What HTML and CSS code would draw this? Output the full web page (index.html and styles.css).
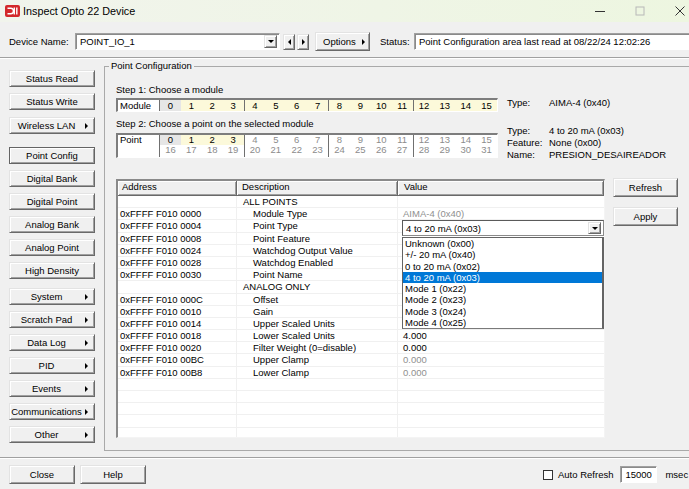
FILE: index.html
```html
<!DOCTYPE html>
<html>
<head>
<meta charset="utf-8">
<title>Inspect Opto 22 Device</title>
<link rel="stylesheet" href="styles.css">
</head>
<body>
<header class="titlebar">
  <svg class="appicon" width="15" height="12" viewBox="0 0 15 12"><rect x="0" y="0" width="15" height="12" rx="2" fill="#d3282b"/><path d="M2.5 3.2h3.2a2.8 2.8 0 0 1 0 5.6H2.5" fill="none" stroke="#fff" stroke-width="1.5"/><path d="M9.3 2.6v6.8M11.8 2.6v6.8" stroke="#fff" stroke-width="1.4"/></svg>
  <span class="title">Inspect Opto 22 Device</span>
  <div class="winctl">
    <span class="wc"><svg width="10" height="10" viewBox="0 0 10 10"><path d="M0 5.5h10" stroke="#333" stroke-width="1"/></svg></span>
    <span class="wc"><svg width="10" height="10" viewBox="0 0 10 10"><rect x="1" y="1" width="8" height="8" fill="none" stroke="#b8b8b8" stroke-width="1"/></svg></span>
    <span class="wc"><svg width="10" height="10" viewBox="0 0 10 10"><path d="M0.5 0.5l9 9M9.5 0.5l-9 9" stroke="#333" stroke-width="1"/></svg></span>
  </div>
</header>

<div class="toolbar">
  <span class="lbl-dev">Device Name:</span>
  <div class="field devcombo"><span>POINT_IO_1</span><span class="raised dbtn"><i class="tri-down"></i></span></div>
  <span class="raised nbtn"><i class="tri-left"></i></span>
  <span class="raised nbtn"><i class="tri-right"></i></span>
  <button class="btn opts"><span>Options</span><i class="tri-right"></i></button>
  <span class="lbl-status">Status:</span>
  <div class="field statusbox">Point Configuration area last read at 08/22/24 12:02:26</div>
</div>
<div class="sep"></div>

<div class="main">
  <nav class="side">
    <button class="btn">Status Read</button>
    <button class="btn">Status Write</button>
    <button class="btn arr g1"><span class="bl">Wireless LAN</span><i class="tri-right"></i></button>
    <button class="btn def g2">Point Config</button>
    <button class="btn">Digital Bank</button>
    <button class="btn">Digital Point</button>
    <button class="btn">Analog Bank</button>
    <button class="btn">Analog Point</button>
    <button class="btn">High Density</button>
    <button class="btn arr g3"><span class="bl">System</span><i class="tri-right"></i></button>
    <button class="btn arr"><span class="bl">Scratch Pad</span><i class="tri-right"></i></button>
    <button class="btn arr"><span class="bl">Data Log</span><i class="tri-right"></i></button>
    <button class="btn arr"><span class="bl">PID</span><i class="tri-right"></i></button>
    <button class="btn arr"><span class="bl">Events</span><i class="tri-right"></i></button>
    <button class="btn arr"><span class="bl">Communications</span><i class="tri-right"></i></button>
    <button class="btn arr"><span class="bl">Other</span><i class="tri-right"></i></button>
  </nav>

  <fieldset class="group">
    <legend>Point Configuration</legend>
    <div class="gbody">
      <div class="steprow s1">
        <div class="stepcol">
          <div class="steplbl">Step 1: Choose a module</div>
          <div class="strip mstrip">
            <div class="slab">Module</div>
            <div class="sgrp"><span class="c sel">0</span><span class="c y">1</span><span class="c y">2</span><span class="c y">3</span></div>
            <div class="sgrp"><span class="c y">4</span><span class="c y">5</span><span class="c y">6</span><span class="c y">7</span></div>
            <div class="sgrp"><span class="c y">8</span><span class="c y">9</span><span class="c y">10</span><span class="c y">11</span></div>
            <div class="sgrp"><span class="c y">12</span><span class="c y">13</span><span class="c y">14</span><span class="c y">15</span></div>
          </div>
        </div>
        <div class="info i1">
          <span>Type:</span><span>AIMA-4 (0x40)</span>
        </div>
      </div>

      <div class="steprow s2">
        <div class="stepcol">
          <div class="steplbl">Step 2: Choose a point on the selected module</div>
          <div class="strip pstrip">
            <div class="slab">Point</div>
            <div class="sgrp">
              <span class="c sel">0</span><span class="c y">1</span><span class="c y">2</span><span class="c y">3</span>
              <span class="c d">16</span><span class="c d">17</span><span class="c d">18</span><span class="c d">19</span>
            </div>
            <div class="sgrp">
              <span class="c d">4</span><span class="c d">5</span><span class="c d">6</span><span class="c d">7</span>
              <span class="c d">20</span><span class="c d">21</span><span class="c d">22</span><span class="c d">23</span>
            </div>
            <div class="sgrp">
              <span class="c d">8</span><span class="c d">9</span><span class="c d">10</span><span class="c d">11</span>
              <span class="c d">24</span><span class="c d">25</span><span class="c d">26</span><span class="c d">27</span>
            </div>
            <div class="sgrp">
              <span class="c d">12</span><span class="c d">13</span><span class="c d">14</span><span class="c d">15</span>
              <span class="c d">28</span><span class="c d">29</span><span class="c d">30</span><span class="c d">31</span>
            </div>
          </div>
        </div>
        <div class="info i2">
          <span>Type:</span><span>4 to 20 mA (0x03)</span>
          <span>Feature:</span><span>None (0x00)</span>
          <span>Name:</span><span>PRESION_DESAIREADOR</span>
        </div>
      </div>

      <div class="tblrow">
        <div class="tblwrap">
          <div class="r hdr"><span>Address</span><span>Description</span><span>Value</span></div>
          <div class="r"><span></span><span class="h1">ALL POINTS</span><span></span></div>
          <div class="r"><span>0xFFFF F010 0000</span><span class="h2">Module Type</span><span class="gv">AIMA-4 (0x40)</span></div>
          <div class="r"><span>0xFFFF F010 0004</span><span class="h2">Point Type</span><span></span></div>
          <div class="r"><span>0xFFFF F010 0008</span><span class="h2">Point Feature</span><span></span></div>
          <div class="r"><span>0xFFFF F010 0024</span><span class="h2">Watchdog Output Value</span><span></span></div>
          <div class="r"><span>0xFFFF F010 0028</span><span class="h2">Watchdog Enabled</span><span></span></div>
          <div class="r"><span>0xFFFF F010 0030</span><span class="h2">Point Name</span><span></span></div>
          <div class="r"><span></span><span class="h1">ANALOG ONLY</span><span></span></div>
          <div class="r"><span>0xFFFF F010 000C</span><span class="h2">Offset</span><span></span></div>
          <div class="r"><span>0xFFFF F010 0010</span><span class="h2">Gain</span><span></span></div>
          <div class="r"><span>0xFFFF F010 0014</span><span class="h2">Upper Scaled Units</span><span></span></div>
          <div class="r"><span>0xFFFF F010 0018</span><span class="h2">Lower Scaled Units</span><span>4.000</span></div>
          <div class="r"><span>0xFFFF F010 0020</span><span class="h2">Filter Weight (0=disable)</span><span>0.000</span></div>
          <div class="r"><span>0xFFFF F010 00BC</span><span class="h2">Upper Clamp</span><span class="gv">0.000</span></div>
          <div class="r"><span>0xFFFF F010 00B8</span><span class="h2">Lower Clamp</span><span class="gv">0.000</span></div>
          <div class="r"><span></span><span></span><span></span></div>
          <div class="r"><span></span><span></span><span></span></div>
          <div class="r"><span></span><span></span><span></span></div>
          <div class="r"><span></span><span></span><span></span></div>
          <div class="r"><span></span><span></span><span></span></div>

          <div class="valcombo"><span>4 to 20 mA (0x03)</span><span class="raised dbtn"><i class="tri-down"></i></span></div>
          <div class="droplist">
            <div class="opt">Unknown (0x00)</div>
            <div class="opt">+/- 20 mA (0x40)</div>
            <div class="opt">0 to 20 mA (0x02)</div>
            <div class="opt on">4 to 20 mA (0x03)</div>
            <div class="opt">Mode 1 (0x22)</div>
            <div class="opt">Mode 2 (0x23)</div>
            <div class="opt">Mode 3 (0x24)</div>
            <div class="opt">Mode 4 (0x25)</div>
          </div>
        </div>
        <div class="sidebtns">
          <button class="btn">Refresh</button>
          <button class="btn">Apply</button>
        </div>
      </div>
    </div>
  </fieldset>
</div>

<div class="sep fsep"></div>
<footer class="footer">
  <button class="btn fbtn">Close</button>
  <button class="btn fbtn">Help</button>
  <span class="chk"></span>
  <span class="chklbl">Auto Refresh</span>
  <div class="field msec">15000</div>
  <span class="msec-lbl">msec</span>
</footer>
</body>
</html>
```

FILE: styles.css
```css
* { box-sizing: border-box; }
html, body { margin: 0; padding: 0; }
body {
  width: 689px;
  height: 489px;
  overflow: hidden;
  background: #f0f0f0;
  font-family: "Liberation Sans", Arial, sans-serif;
  font-size: 9.5px;
  color: #000;
}

/* title bar */
.titlebar {
  height: 22px;
  display: flex;
  align-items: center;
  padding-left: 5px;
  background: linear-gradient(90deg, #f1f4ec 0%, #eff5e6 55%, #edf6e0 100%);
}
.appicon { display: block; margin-right: 3px; }
.title { font-size: 10.8px; }
.winctl { margin-left: auto; margin-right: -11px; display: flex; align-self: stretch; }
.wc { width: 40px; display: flex; align-items: center; justify-content: center; }
.wc svg { display: block; }

/* triangles */
.tri-down { display: inline-block; width: 0; height: 0; border-left: 3px solid transparent; border-right: 3px solid transparent; border-top: 3px solid #000; }
.tri-right { display: inline-block; width: 0; height: 0; border-top: 3px solid transparent; border-bottom: 3px solid transparent; border-left: 3px solid #000; }
.tri-left { display: inline-block; width: 0; height: 0; border-top: 3px solid transparent; border-bottom: 3px solid transparent; border-right: 3px solid #000; }

/* generic 3d */
.raised {
  display: flex; align-items: center; justify-content: center;
  background: #f0f0f0;
  border: 1px solid;
  border-color: #e3e3e3 #696969 #696969 #e3e3e3;
  box-shadow: inset 1px 1px 0 #fff, inset -1px -1px 0 #a0a0a0;
}
.field {
  background: #fff;
  border: 1px solid;
  border-color: #a0a0a0 #fff #fff #a0a0a0;
  box-shadow: inset 1px 1px 0 #8a8a8a;
}
.btn {
  display: flex; align-items: center; justify-content: center;
  height: 17px;
  padding: 0;
  margin: 0;
  font: inherit;
  color: #000;
  background: #f0f0f0;
  border: 1px solid;
  border-color: #e3e3e3 #696969 #696969 #e3e3e3;
  box-shadow: inset 1px 1px 0 #fff, inset -1px -1px 0 #a0a0a0;
}

/* toolbar */
.toolbar {
  margin-top: 5px;
  height: 29px;
  display: flex;
  align-items: center;
  padding-left: 9px;
  white-space: nowrap;
}
.toolbar > * { flex: none; }
.lbl-dev { width: 66px; }
.devcombo { width: 205px; height: 17px; display: flex; align-items: center; padding: 0 2px 0 4px; }
.devcombo .dbtn { margin-left: auto; width: 13px; height: 13px; }
.nbtn { width: 12px; height: 16px; margin-left: 3px; }
.nbtn + .nbtn { margin-left: 2px; }
.opts { width: 55px; height: 19px; margin-left: 6px; justify-content: flex-start; padding-left: 7px; }
.opts .tri-right { margin-left: 6px; }
.lbl-status { margin-left: 10px; width: 34px; }
.statusbox { width: 300px; height: 17px; line-height: 15px; padding-left: 4px; }

.sep { height: 2px; border-top: 1px solid #a0a0a0; border-bottom: 1px solid #fff; margin-top: 1px; }

/* main */
.main { display: flex; align-items: flex-start; }
.side {
  width: 86px;
  flex: none;
  margin: 11px 9px 0 9px;
  display: flex;
  flex-direction: column;
  gap: 6px;
}
.side .g1 { margin-top: 1px; }
.side .g2 { margin-top: 7px; }
.side .g3 { margin-top: 3px; }
.btn.def {
  border-color: #646464;
  box-shadow: inset 1px 1px 0 #fff, inset -1px -1px 0 #a0a0a0;
}
.btn.arr { justify-content: flex-start; }
.btn.arr .bl { flex: 1; text-align: center; white-space: nowrap; }
.btn.arr .tri-right { margin: 0 6px 0 2px; }

/* group box */
.group {
  flex: none;
  width: 620px;
  min-width: 0;
  margin: 1px 0 0 0;
  padding: 0 0 12px 0;
  border: 1px solid #a9a9a9;
}
.group legend { margin-left: 4px; padding: 0 2px; line-height: 12px; }
.gbody { padding-left: 11px; }

.steprow { display: flex; align-items: flex-start; gap: 9px; }
.s1 { margin-top: 12px; }
.s2 { margin-top: 6px; }
.steplbl { line-height: 12px; white-space: nowrap; }
.info { display: grid; grid-template-columns: 42px auto; line-height: 12px; white-space: nowrap; }
.i1 { margin-top: 13px; }
.i2 { margin-top: 7px; }

.strip {
  display: flex;
  width: 382px;
  background: #fff;
  border-style: solid;
  border-width: 2px 1px 1px 2px;
  border-color: #7d7d7d #fff #fff #7d7d7d;
}
.mstrip { margin-top: 2px; height: 14px; }
.pstrip { margin-top: 3px; height: 25px; }
.slab { width: 41px; padding-left: 2px; line-height: 11px; }
.pstrip .slab { line-height: 10px; }
.sgrp {
  width: 84.5px;
  border-left: 1px solid #707070;
  display: grid;
  grid-template-columns: repeat(4, 1fr);
  grid-auto-rows: 11px;
}
.pstrip .sgrp { grid-template-rows: 10px 12px; }
.c { text-align: center; line-height: 11px; }
.pstrip .c { line-height: 10px; }
.c.sel { background: #e6e6e6; }
.c.y { background: #fcf9da; }
.c.d { color: #8c8c8c; }

/* table */
.tblrow { display: flex; align-items: flex-start; margin-top: 18px; }
.tblwrap {
  position: relative;
  width: 489px;
  height: 259px;
  overflow: hidden;
  background: #fff;
  border-style: solid;
  border-width: 2px 1px 1px 2px;
  border-color: #8a8a8a #f4f4f4 #f4f4f4 #8a8a8a;
}
.r {
  display: grid;
  grid-template-columns: 119px 161px 206px;
  height: 12.2px;
}
.r > span {
  display: block;
  height: 12.2px;
  line-height: 11.2px;
  padding-left: 2px;
  white-space: nowrap;
  overflow: hidden;
  border-bottom: 1px solid #f0f0f0;
  border-right: 1px solid #f0f0f0;
}
.r > span:nth-child(3) { padding-left: 5px; border-right: 0; }
.r > .h1 { padding-left: 6px; }
.r > .h2 { padding-left: 16px; }
.gv { color: #8f8f8f; }
.r.hdr { height: 15px; }
.r.hdr > span {
  height: 15px;
  line-height: 12px;
  background: #f0f0f0;
  border-right: 1px solid #696969;
  border-bottom: 1px solid #696969;
  box-shadow: inset 1px 1px 0 #fff, inset -1px -1px 0 #a0a0a0;
}
.r.hdr > span:nth-child(1) { padding-left: 4px; }
.r.hdr > span:nth-child(2) { padding-left: 5px; }
.r.hdr > span:nth-child(3) { padding-left: 6px; border-right: 1px solid #696969; }

.valcombo {
  position: absolute;
  left: 284px;
  top: 39px;
  width: 202px;
  height: 16px;
  display: flex;
  align-items: center;
  padding: 0 2px 0 3px;
  background: #fff;
  border: 1px solid;
  border-color: #5a5a5a #8a8a8a #8a8a8a #5a5a5a;
}
.valcombo .dbtn { margin-left: auto; width: 13px; height: 12px; }
.droplist {
  position: absolute;
  left: 284px;
  top: 56px;
  width: 202px;
  height: 92px;
  background: #fff;
  border: 1px solid #646464;
  border-right-width: 2px;
  border-bottom-color: #7a7a7a;
}
.opt { height: 11.25px; line-height: 11.25px; padding-left: 2px; white-space: nowrap; }
.opt.on { background: #0078d7; color: #fff; }

.sidebtns { margin-left: 8px; margin-top: -1px; display: flex; flex-direction: column; gap: 10px; }
.sidebtns .btn { width: 65px; height: 19px; }

/* footer */
.fsep { margin-top: 6px; }
.footer { display: flex; align-items: center; padding: 6px 0 0 9px; white-space: nowrap; }
.footer > * { flex: none; }
.fbtn { width: 66px; height: 19px; }
.fbtn + .fbtn { margin-left: 5px; }
.chk {
  margin-left: 397px;
  width: 10px;
  height: 10px;
  background: #fff;
  border: 1px solid #333;
}
.chklbl { margin-left: 5px; }
.msec { margin-left: 7px; width: 37px; height: 17px; line-height: 15px; padding-left: 4px; }
.msec-lbl { margin-left: 8px; }
```
